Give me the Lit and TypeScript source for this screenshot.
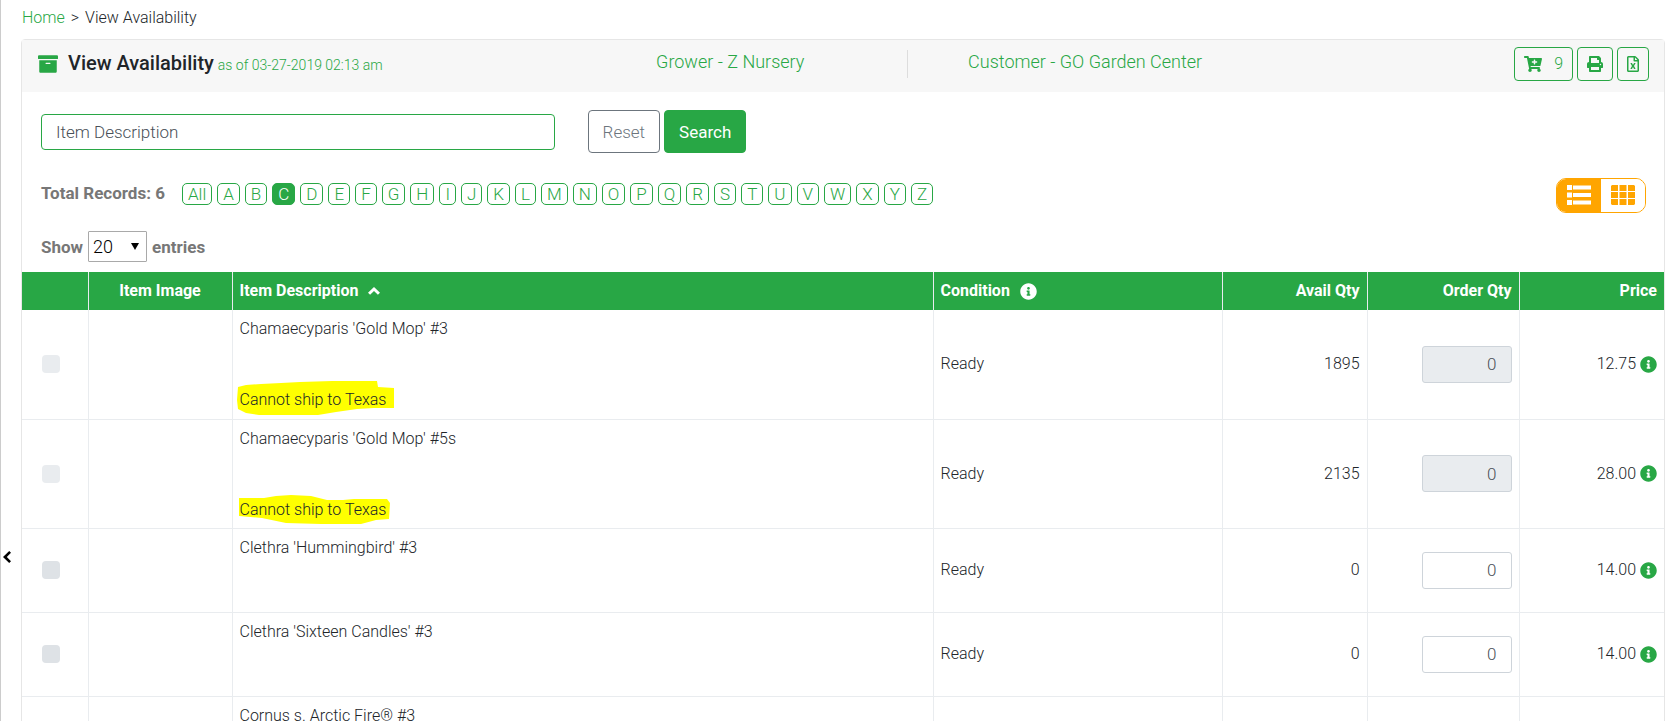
import { LitElement, html, css, svg, nothing } from "lit";
import { customElement, property, state } from "lit/decorators.js";
import { classMap } from "lit/directives/class-map.js";

const ICONS = {
  archive: {
    box: "0 0 512 512",
    d: "M32 448c0 17.7 14.3 32 32 32h384c17.7 0 32-14.3 32-32V160H32v288zm160-212c0-6.6 5.4-12 12-12h104c6.6 0 12 5.4 12 12v8c0 6.6-5.4 12-12 12H204c-6.6 0-12-5.4-12-12v-8zM480 32H32C14.3 32 0 46.3 0 64v48c0 8.8 7.2 16 16 16h480c8.8 0 16-7.2 16-16V64c0-17.7-14.3-32-32-32z",
  },
  cart: {
    box: "0 0 576 512",
    d: "M504.717 320H211.572l6.545 32h268.418c15.401 0 26.816 14.301 23.403 29.319l-5.517 24.276C523.112 414.668 536 433.828 536 456c0 31.202-25.519 56.444-56.824 55.994-29.823-.429-54.35-24.631-55.155-54.447-.44-16.287 6.085-31.049 16.803-41.548H231.176C241.553 426.165 248 440.326 248 456c0 31.813-26.528 57.431-58.67 55.938-28.54-1.325-51.751-24.385-53.251-52.917-1.158-22.034 10.436-41.455 28.051-51.586L93.883 64H24C10.745 64 0 53.255 0 40V24C0 10.745 10.745 0 24 0h102.529c11.401 0 21.228 8.021 23.513 19.19L159.208 64H551.99c15.401 0 26.816 14.301 23.403 29.319l-47.273 208C525.637 312.246 515.923 320 504.717 320zM408 168h-48v-40c0-8.837-7.163-16-16-16h-16c-8.837 0-16 7.163-16 16v40h-48c-8.837 0-16 7.163-16 16v16c0 8.837 7.163 16 16 16h48v40c0 8.837 7.163 16 16 16h16c8.837 0 16-7.163 16-16v-40h48c8.837 0 16-7.163 16-16v-16c0-8.837-7.163-16-16-16z",
  },
  print: {
    box: "0 0 512 512",
    d: "M448 192V77.25c0-8.49-3.37-16.62-9.37-22.63L393.37 9.37c-6-6-14.14-9.37-22.63-9.37H96C78.33 0 64 14.33 64 32v160c-35.35 0-64 28.65-64 64v112c0 8.84 7.16 16 16 16h48v96c0 17.67 14.33 32 32 32h320c17.67 0 32-14.33 32-32v-96h48c8.84 0 16-7.16 16-16V256c0-35.35-28.65-64-64-64zm-64 256H128v-96h256v96zm0-224H128V64h192v48c0 8.84 7.16 16 16 16h48v96zm48 72c-13.25 0-24-10.75-24-24 0-13.26 10.75-24 24-24s24 10.74 24 24c0 13.25-10.75 24-24 24z",
  },
  excel: {
    box: "0 0 384 512",
    d: "M369.9 97.9L286 14C277 5 264.8-.1 252.1-.1H48C21.5 0 0 21.5 0 48v416c0 26.5 21.5 48 48 48h288c26.5 0 48-21.5 48-48V131.9c0-12.7-5.1-25-14.1-34zM332.1 128H256V51.9l76.1 76.1zM48 464V48h160v104c0 13.3 10.7 24 24 24h104v288H48zm212-240h-28.8c-4.4 0-8.4 2.4-10.5 6.3-18 33.1-22.2 42.4-28.6 57.7-13.9-29.1-6.9-17.3-28.6-57.7-2.1-3.9-6.2-6.3-10.6-6.3H124c-9.3 0-15 10-10.4 18l46.3 78-46.3 78c-4.7 8 1.1 18 10.4 18h28.9c4.4 0 8.4-2.4 10.5-6.3 21.7-40 23-45 28.6-57.7 14.9 30.2 5.9 15.9 28.6 57.7 2.1 3.9 6.2 6.3 10.6 6.3H260c9.3 0 15-10 10.4-18L224 320c.7-1.1 30.3-50.5 46.3-78 4.7-8-1.1-18-10.3-18z",
  },
  info: {
    box: "0 0 512 512",
    d: "M256 8C119.043 8 8 119.083 8 256c0 136.997 111.043 248 248 248s248-111.003 248-248C504 119.083 392.957 8 256 8zm0 110c23.196 0 42 18.804 42 42s-18.804 42-42 42-42-18.804-42-42 18.804-42 42-42zm56 254c0 6.627-5.373 12-12 12h-88c-6.627 0-12-5.373-12-12v-24c0-6.627 5.373-12 12-12h12v-64h-12c-6.627 0-12-5.373-12-12v-24c0-6.627 5.373-12 12-12h64c6.627 0 12 5.373 12 12v100h12c6.627 0 12 5.373 12 12v24z",
  },
  list: {
    box: "0 0 24 20",
    d: "M0 0h5v5H0zM6 .5h18v4H6zM0 7.500h5v5H0zM6 8h18v4H6zM0 15h5v5H0zM6 15.500h18v4H6z",
  },
  grid: {
    box: "0 0 24 20",
    d: "M1 0h6v6H0V1zM8.500 0h7v6h-7zM17 0h6l1 1v5h-7zM0 7h7v6H0zM8.500 7h7v6h-7zM17 7h7v6h-7zM0 14h7v6H1l-1-1zM8.500 14h7v6h-7zM17 14h7v5l-1 1h-6z",
  },
  back: { box: "0 0 8 12", d: "M6.200 0L8 1.800 3.800 6 8 10.200 6.200 12 0 6z" },
  sort: { box: "0 0 12 8", d: "M6 0l6 5.700L9.900 7.800 6 4 2.100 7.800 0 5.700z" },
} as const;

const MARKS = [
  "2,7 10,5 25,4 45,3 64,2 96,1 141,1 142,7 158,8 158,28 138,28 121,29 100,32 82,35 23,35 10,33 2,29 1,20",
  "3,8 28,8 40,6 55,5 75,6 91,10 107,10 118,9 151,9 154,13 153,29 140,30 125,34 85,34 50,33 26,28 3,26",
];

@customElement("app-icon")
export class AppIcon extends LitElement {
  @property() name: keyof typeof ICONS = "info";

  static styles = css`
    :host {
      display: inline-flex;
    }
    svg {
      width: 100%;
      height: 100%;
      fill: currentColor;
    }
  `;

  render() {
    const icon = ICONS[this.name];
    return html`<svg viewBox=${icon.box} aria-hidden="true">${svg`<path d=${icon.d}></path>`}</svg>`;
  }
}

interface Item {
  name: string;
  condition: string;
  avail: number;
  price: string;
  note?: string;
  tall?: boolean;
}

const ITEMS: Item[] = [
  { name: "Chamaecyparis 'Gold Mop' #3", condition: "Ready", avail: 1895, price: "12.75", note: "Cannot ship to Texas", tall: true },
  { name: "Chamaecyparis 'Gold Mop' #5s", condition: "Ready", avail: 2135, price: "28.00", note: "Cannot ship to Texas", tall: true },
  { name: "Clethra 'Hummingbird' #3", condition: "Ready", avail: 0, price: "14.00" },
  { name: "Clethra 'Sixteen Candles' #3", condition: "Ready", avail: 0, price: "14.00" },
  { name: "Cornus s. Arctic Fire® #3", condition: "Ready", avail: 0, price: "14.00", tall: true },
];

const LETTERS = ["All", ..."ABCDEFGHIJKLMNOPQRSTUVWXYZ"];

@customElement("app-root")
export class AppRoot extends LitElement {
  @state() private letter = "C";
  @state() private view = "list";

  static styles = css`
    :host {
      --green: #28a745;
      --line: #e9ecef;
      --orange: #ffa500;
      display: grid;
      grid-template-columns: 21px minmax(0, 1fr);
      grid-template-rows: 100%;
      height: 100vh;
      overflow: hidden;
      background: #fff;
      color: #212529;
      font: 300 16px/24px Roboto, "Liberation Sans", sans-serif;
    }
    * {
      box-sizing: border-box;
    }
    a {
      color: var(--green);
      text-decoration: none;
    }
    button,
    input,
    select {
      margin: 0;
      font: inherit;
    }
    button {
      cursor: pointer;
    }
    .rail {
      display: grid;
      grid-template-rows: 76fr 24fr;
      border-left: 1px solid #ccc;
    }
    .rail-button {
      grid-row: 2;
      align-self: start;
      justify-self: start;
      display: flex;
      padding: 3px 2px;
      border: 0;
      background: none;
      color: #000;
    }
    .rail-button app-icon {
      width: 8px;
      height: 12px;
    }
    .page {
      padding: 6px 14px 0 0;
    }
    .crumbs {
      display: flex;
      gap: 6px;
      padding-left: 1px;
    }
    .card {
      margin-top: 9px;
      border: 1px solid #e6e6e6;
      border-radius: 4px;
    }
    .card-head {
      display: grid;
      grid-template-columns: 32fr 22fr 22fr 24fr;
      align-items: center;
      height: 52px;
      padding: 0 15px 4px 16px;
      background: #f7f7f7;
    }
    .title {
      display: flex;
      align-items: baseline;
      gap: 4px;
      margin: 0;
      font-size: 20px;
      font-weight: 500;
    }
    .title app-icon {
      align-self: center;
      width: 20px;
      height: 20px;
      margin-right: 6px;
      color: var(--green);
    }
    .title small {
      font-size: 14px;
      font-weight: 300;
      color: var(--green);
    }
    .party {
      height: 28px;
      padding-bottom: 4px;
      font-size: 18px;
      text-align: center;
      color: var(--green);
    }
    .party.ruled {
      border-right: 1px solid #ddd;
    }
    .actions {
      display: flex;
      justify-content: flex-end;
      gap: 4px;
    }
    .action {
      display: flex;
      align-items: center;
      gap: 12px;
      height: 34px;
      padding: 0 9px;
      border: 1px solid var(--green);
      border-radius: 4px;
      background: none;
      color: var(--green);
    }
    .action app-icon {
      width: 16px;
      height: 16px;
    }
    .action .narrow {
      width: 12px;
    }
    .action .wide {
      width: 18px;
    }
    .filters {
      display: flex;
      align-items: center;
      padding: 18px 18px 0 19px;
    }
    .search {
      width: 32%;
      height: 36px;
      margin-right: 33px;
      padding: 0 14px;
      border: 1px solid var(--green);
      border-radius: 4px;
      background: #fff;
      color: #495057;
      font-size: 17px;
    }
    .search::placeholder {
      color: #495057;
      opacity: 1;
    }
    .btn {
      height: 43px;
      margin-right: 4px;
      padding: 0 14px;
      border: 1px solid #6c757d;
      border-radius: 4px;
      background: #fff;
      color: #6c757d;
      font-size: 17px;
    }
    .btn.primary {
      border-color: var(--green);
      background: var(--green);
      color: #fff;
      font-weight: 400;
    }
    .index {
      display: flex;
      align-items: center;
      justify-content: space-between;
      padding: 25px 18px 0 19px;
    }
    .total {
      margin-right: 17px;
      margin-bottom: 6px;
      font-size: 17px;
      font-weight: 700;
      color: #777;
    }
    .letters {
      display: flex;
      flex: 1;
      align-items: center;
      gap: 5px;
      padding-bottom: 3px;
    }
    .letter {
      height: 22px;
      padding: 0 5px;
      border: 1px solid var(--green);
      border-radius: 5px;
      background: none;
      color: var(--green);
      font-size: 17px;
      line-height: 20px;
    }
    .letter.on {
      background: var(--green);
      color: #fff;
    }
    .toggle {
      display: flex;
      overflow: hidden;
      border: 1px solid var(--orange);
      border-radius: 10px;
    }
    .view {
      display: flex;
      padding: 6px 10px 7px;
      border: 0;
      background: #fff;
      color: var(--orange);
    }
    .view.on {
      background: var(--orange);
      color: #fff;
    }
    .view app-icon {
      width: 24px;
      height: 20px;
    }
    .length {
      display: flex;
      align-items: center;
      gap: 5px;
      padding: 18px 18px 10px 19px;
      font-size: 17px;
      font-weight: 700;
      color: #777;
    }
    .pick {
      display: grid;
      align-items: center;
    }
    .pick > * {
      grid-area: 1 / 1;
    }
    .pick::after {
      content: "";
      grid-area: 1 / 1;
      justify-self: end;
      margin-right: 8px;
      border: 4px solid transparent;
      border-top: 7px solid #000;
      border-bottom: 0;
      pointer-events: none;
    }
    .select {
      width: 59px;
      height: 31px;
      padding: 0 4px;
      border: 1px solid #a9a9a9;
      border-radius: 1px;
      appearance: none;
      background: #fff;
      color: #000;
      font-size: 18px;
      font-weight: 300;
    }
    .items {
      width: 100%;
      border-collapse: collapse;
      table-layout: fixed;
    }
    .c-check {
      width: 66px;
    }
    .c-image {
      width: 144px;
    }
    .c-cond {
      width: 289px;
    }
    .c-qty {
      width: 145px;
    }
    .c-order {
      width: 152px;
    }
    th,
    td {
      padding: 7px;
      border-right: 1px solid var(--line);
      text-align: left;
    }
    th {
      height: 38px;
      background: var(--green);
      color: #fff;
      font-weight: 700;
    }
    th:last-child,
    td:last-child {
      border-right: 0;
    }
    td {
      height: 84px;
      border-bottom: 1px solid var(--line);
    }
    .tall td {
      height: 109px;
    }
    .center {
      text-align: center;
    }
    .right {
      text-align: right;
    }
    .label {
      display: inline-flex;
      align-items: center;
      gap: 10px;
    }
    .label app-icon {
      width: 17px;
      height: 17px;
    }
    .label .caret {
      width: 12px;
      height: 8px;
    }
    .desc {
      padding-bottom: 5px;
      vertical-align: top;
    }
    .note {
      position: relative;
      z-index: 0;
      width: max-content;
      margin-top: 47px;
    }
    .mark {
      position: absolute;
      z-index: -1;
      left: -4px;
      top: -8px;
      width: 160px;
      height: 36px;
      fill: #ff0;
    }
    .tick {
      display: block;
      width: 18px;
      height: 18px;
      margin-left: 13px;
      border-radius: 4px;
      appearance: none;
      background: #dee2e6;
    }
    .tick:disabled {
      background: #e9ecef;
    }
    .order {
      width: 90px;
      height: 37px;
      padding: 0 14px;
      border: 1px solid #ced4da;
      border-radius: 3px;
      background: #fff;
      color: #495057;
      font-size: 17px;
      text-align: right;
    }
    .order:disabled {
      background: #e9ecef;
    }
    .price {
      display: flex;
      align-items: center;
      justify-content: flex-end;
      gap: 4px;
    }
    .price app-icon {
      width: 17px;
      height: 17px;
      color: var(--green);
    }
  `;

  private renderRow(item: Item, i: number) {
    const locked = Boolean(item.note);
    return html`<tr class=${classMap({ tall: Boolean(item.tall) })}>
      <td><input class="tick" type="checkbox" aria-label="Select ${item.name}" ?disabled=${locked} /></td>
      <td></td>
      <td class="desc">
        <div>${item.name}</div>
        ${item.note
          ? html`<div class="note">
              <svg class="mark" viewBox="0 0 160 36" aria-hidden="true">
                ${svg`<polygon points=${MARKS[i % MARKS.length]}></polygon>`}
              </svg>
              ${item.note}
            </div>`
          : nothing}
      </td>
      <td>${item.condition}</td>
      <td class="right">${item.avail}</td>
      <td class="right">
        <input class="order" type="text" inputmode="numeric" .value=${"0"} aria-label="Order quantity for ${item.name}" ?disabled=${locked} />
      </td>
      <td><div class="price">${item.price}<app-icon name="info"></app-icon></div></td>
    </tr>`;
  }

  render() {
    return html`
      <aside class="rail">
        <button class="rail-button" aria-label="Open side panel"><app-icon name="back"></app-icon></button>
      </aside>
      <main class="page">
        <nav class="crumbs" aria-label="Breadcrumb">
          <a href="#home">Home</a><span>&gt;</span><span>View Availability</span>
        </nav>
        <section class="card">
          <header class="card-head">
            <h1 class="title">
              <app-icon name="archive"></app-icon>View Availability
              <small>as of 03-27-2019 02:13 am</small>
            </h1>
            <div class="party ruled">Grower - Z Nursery</div>
            <div class="party">Customer - GO Garden Center</div>
            <div class="actions">
              <button class="action" aria-label="Cart, 9 items"><app-icon class="wide" name="cart"></app-icon>9</button>
              <button class="action" aria-label="Print"><app-icon name="print"></app-icon></button>
              <button class="action" aria-label="Export to Excel"><app-icon class="narrow" name="excel"></app-icon></button>
            </div>
          </header>
          <form class="filters" @submit=${(e: Event) => e.preventDefault()}>
            <input class="search" type="text" placeholder="Item Description" aria-label="Item Description" />
            <button class="btn" type="reset">Reset</button>
            <button class="btn primary" type="submit">Search</button>
          </form>
          <div class="index">
            <div class="total">Total Records: 6</div>
            <div class="letters">
              ${LETTERS.map(
                (l) => html`<button
                  class=${classMap({ letter: true, on: l === this.letter })}
                  @click=${() => (this.letter = l)}
                >${l}</button>`
              )}
            </div>
            <div class="toggle">
              ${(["list", "grid"] as const).map(
                (v) => html`<button
                  class=${classMap({ view: true, on: v === this.view })}
                  aria-label="${v} view"
                  @click=${() => (this.view = v)}
                ><app-icon name=${v}></app-icon></button>`
              )}
            </div>
          </div>
          <div class="length">
            <label for="length">Show</label>
            <span class="pick">
              <select id="length" class="select">
                <option>20</option>
                <option>50</option>
              </select>
            </span>
            <span>entries</span>
          </div>
          <table class="items">
            <colgroup>
              <col class="c-check" />
              <col class="c-image" />
              <col />
              <col class="c-cond" />
              <col class="c-qty" />
              <col class="c-order" />
              <col class="c-qty" />
            </colgroup>
            <thead>
              <tr>
                <th></th>
                <th class="center">Item Image</th>
                <th><span class="label">Item Description<app-icon class="caret" name="sort"></app-icon></span></th>
                <th><span class="label">Condition<app-icon name="info"></app-icon></span></th>
                <th class="right">Avail Qty</th>
                <th class="right">Order Qty</th>
                <th class="right">Price</th>
              </tr>
            </thead>
            <tbody>
              ${ITEMS.map((item, i) => this.renderRow(item, i))}
            </tbody>
          </table>
        </section>
      </main>
    `;
  }
}
